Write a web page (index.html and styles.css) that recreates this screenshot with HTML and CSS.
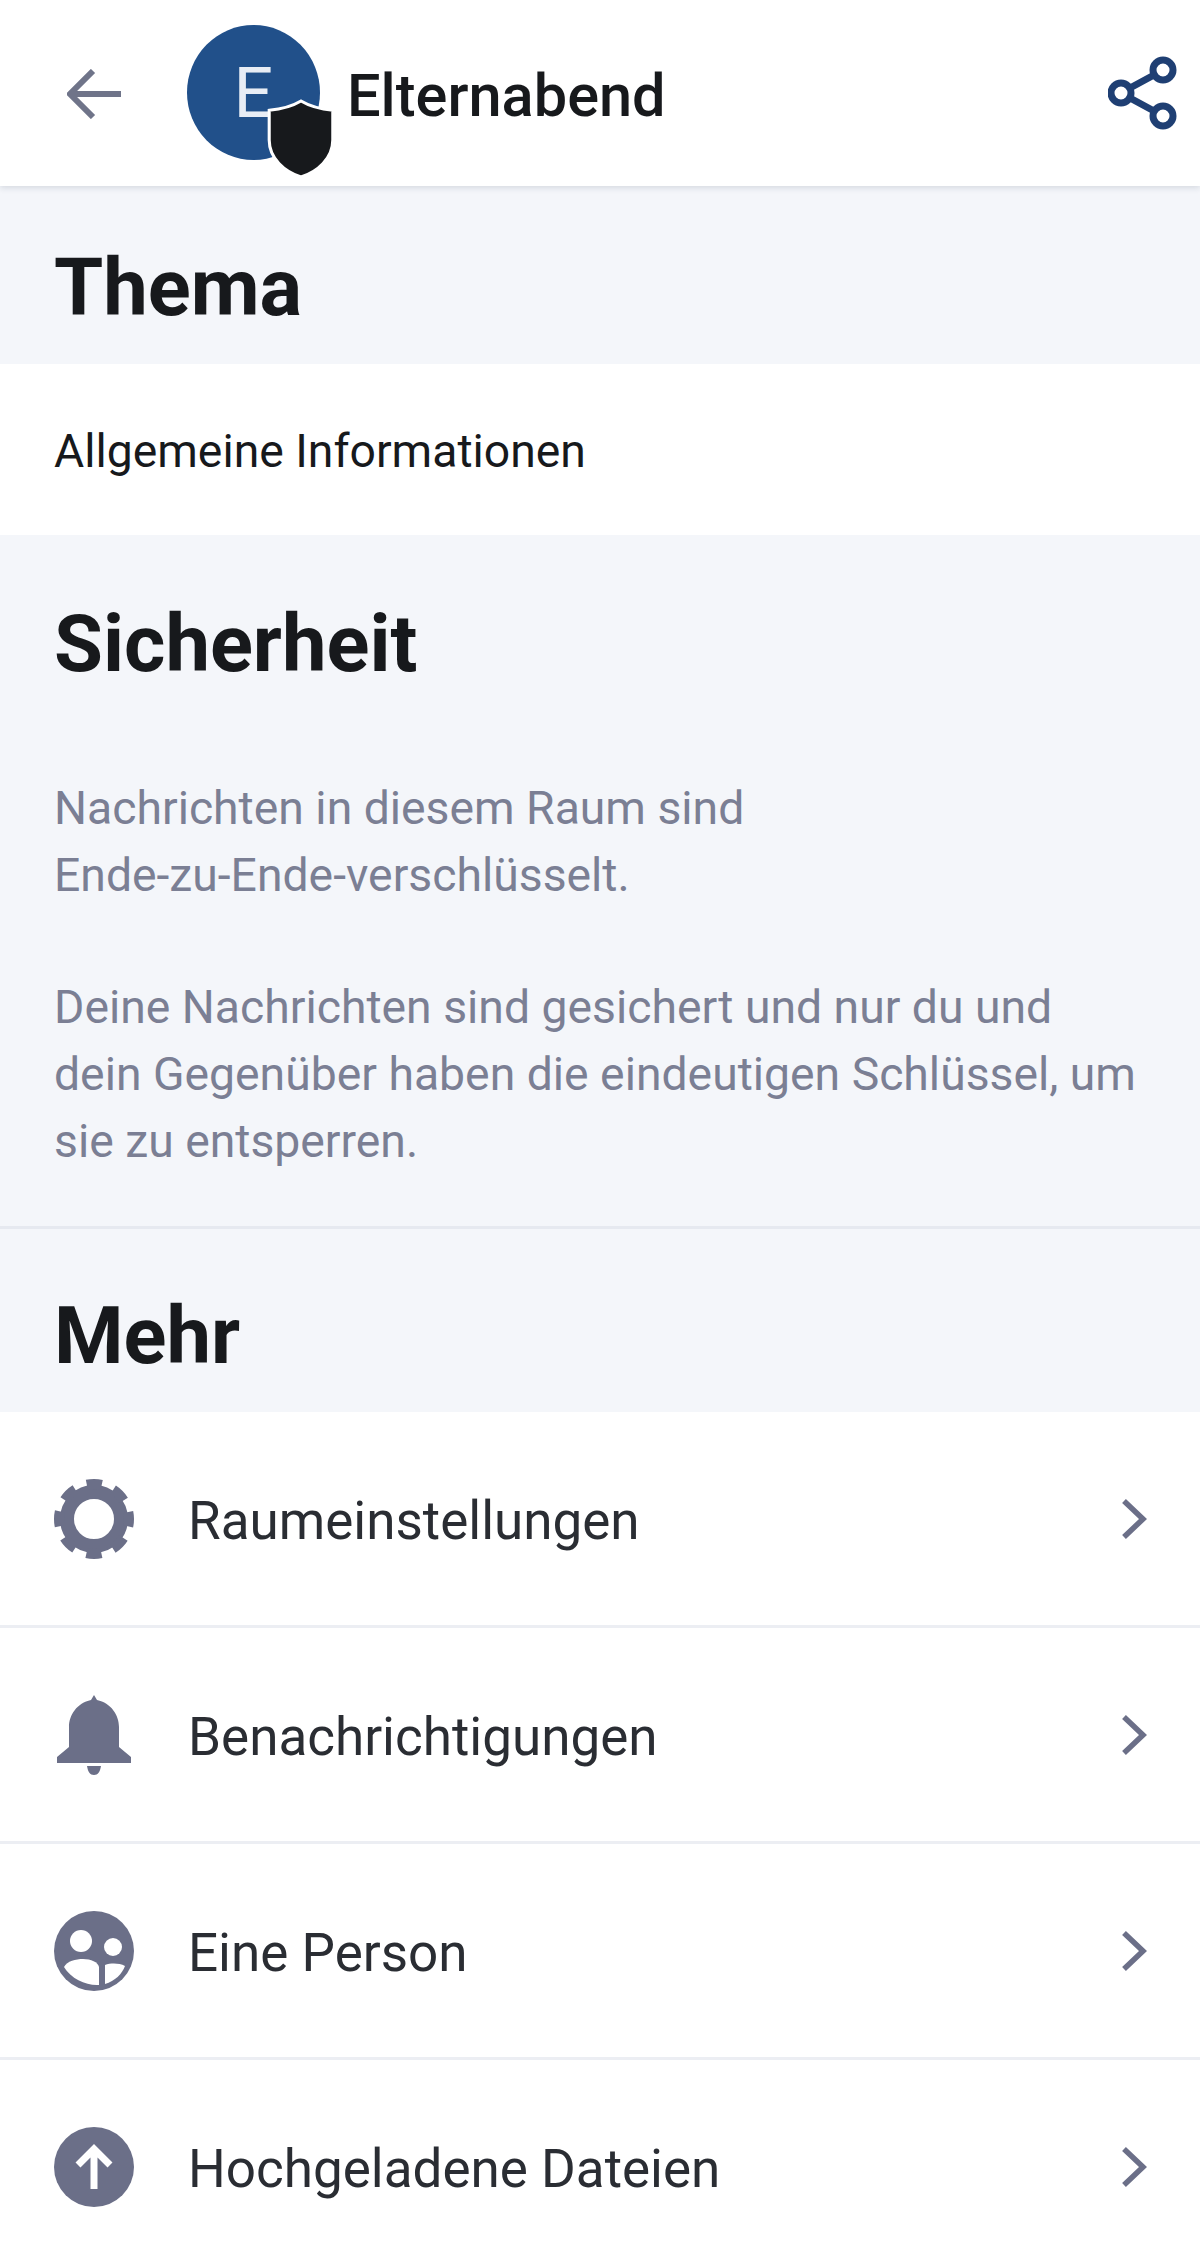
FILE: index.html
```html
<!DOCTYPE html>
<html lang="de">
<head>
    <meta charset="UTF-8">
    <title>Elternabend</title>
    <link rel="stylesheet" href="styles.css">
</head>
<body>
    <header class="topbar">
        <svg class="back" viewBox="0 0 54 50"><path d="M54 25H4M26 2 3 25l23 23" fill="none" stroke="#6f7489" stroke-width="6"/></svg>
        <div class="avatar">
            <span>E</span>
            <svg class="shield" viewBox="0 0 68 78"><path d="M34 2C44 8 54 10 65 11V40C65 58 50 71 34 76 18 71 3 58 3 40V11C14 10 24 8 34 2Z" fill="#17191c" stroke="#fff" stroke-width="3"/></svg>
        </div>
        <div class="room-name">Elternabend</div>
        <svg class="share" viewBox="0 0 70 74"><g fill="none" stroke="#1f3f73" stroke-width="7"><circle cx="13" cy="37" r="10"/><circle cx="55" cy="14" r="10"/><circle cx="55" cy="60" r="10"/><path d="M22 32 46 19M22 42 46 55"/></g></svg>
    </header>

    <section class="band band-topic"><h2>Thema</h2></section>
    <section class="topic"><p>Allgemeine Informationen</p></section>

    <section class="band band-security">
        <h2>Sicherheit</h2>
        <p>Nachrichten in diesem Raum sind<br>Ende-zu-Ende-verschlüsselt.</p>
        <p>Deine Nachrichten sind gesichert und nur du und<br>dein Gegenüber haben die eindeutigen Schlüssel, um<br>sie zu entsperren.</p>
    </section>

    <section class="band band-more"><h2>Mehr</h2></section>

    <ul class="menu">
        <li>
            <svg class="icon" viewBox="0 0 80 80"><g fill="none" stroke="#6b6f88"><circle cx="40" cy="40" r="27" stroke-width="14"/><circle cx="40" cy="40" r="35" stroke-width="10" stroke-dasharray="15 12.49" stroke-dashoffset="7.5"/></g></svg>
            <span>Raumeinstellungen</span>
            <svg class="chevron" viewBox="0 0 26 40"><path d="M3 2 22 20 3 38" fill="none" stroke="#6b6f88" stroke-width="5.5"/></svg>
        </li>
        <li>
            <svg class="icon" viewBox="0 0 80 80"><path fill="#6b6f88" d="M40 0l3 5C57 8 65 20 65 32V52L77 62V68H3V62L15 52V32C15 20 23 8 37 5ZM33 71H47C46 77 44 80 40 80S34 77 33 71Z"/></svg>
            <span>Benachrichtigungen</span>
            <svg class="chevron" viewBox="0 0 26 40"><path d="M3 2 22 20 3 38" fill="none" stroke="#6b6f88" stroke-width="5.5"/></svg>
        </li>
        <li>
            <svg class="icon" viewBox="0 0 80 80"><circle cx="40" cy="40" r="40" fill="#6b6f88"/><g fill="#fff"><circle cx="27" cy="30" r="11"/><circle cx="59" cy="36" r="9"/><path d="M10 56c3-6 12-8 19-8 8 0 15 3 16 8v18C33 75 17 68 10 56Z"/><path d="M51 54c6-2 14-2 20 1-3 8-10 15-20 18Z"/></g></svg>
            <span>Eine Person</span>
            <svg class="chevron" viewBox="0 0 26 40"><path d="M3 2 22 20 3 38" fill="none" stroke="#6b6f88" stroke-width="5.5"/></svg>
        </li>
        <li>
            <svg class="icon" viewBox="0 0 80 80"><circle cx="40" cy="40" r="40" fill="#6b6f88"/><path d="M40 62V24M24 38l16-16 16 16" fill="none" stroke="#fff" stroke-width="7"/></svg>
            <span>Hochgeladene Dateien</span>
            <svg class="chevron" viewBox="0 0 26 40"><path d="M3 2 22 20 3 38" fill="none" stroke="#6b6f88" stroke-width="5.5"/></svg>
        </li>
    </ul>
</body>
</html>
```

FILE: styles.css
```css
body {
    margin: 0;
    font-family: Roboto, "Liberation Sans", sans-serif;
    background-color: #ffffff;
    color: #17191c;
    height: 2258px;
    overflow: hidden;
}
.topbar {
    height: 186px;
    display: flex;
    align-items: center;
    background-color: #ffffff;
    box-shadow: 0 2px 6px rgba(30, 40, 70, 0.14);
    position: relative;
    padding: 0 22px 0 67px;
}
.back {
    width: 54px;
    height: 50px;
    margin-top: 2px;
}
.avatar {
    width: 133px;
    height: 135px;
    border-radius: 50%;
    background-color: #21508a;
    margin-left: 66px;
    margin-top: -1px;
    display: flex;
    align-items: center;
    justify-content: center;
    position: relative;
    color: #e8edf5;
    font-size: 70px;
}
.shield {
    position: absolute;
    left: 79px;
    top: 74px;
    width: 70px;
    height: 80px;
}
.room-name {
    font-weight: 500;
    font-size: 59.5px;
    margin-left: 27px;
    flex: 1;
    margin-top: 6px;
}
.share {
    width: 70px;
    height: 74px;
}
.band {
    background-color: #f4f6fa;
    padding: 0 54px;
}
.band h2 {
    margin: 0;
    font-size: 79.5px;
    font-weight: 700;
    line-height: 88px;
}
.band-topic {
    height: 178px;
    box-sizing: border-box;
    padding-top: 26px;
    display: flex;
    align-items: center;
}
.topic {
    height: 171px;
    display: flex;
    align-items: center;
    padding: 0 54px;
}
.topic p {
    margin: 3px 0 0;
    font-size: 46.3px;
}
.band-security {
    height: 694px;
    padding-top: 65px;
    box-sizing: border-box;
    border-bottom: 3px solid #e6e9f0;
}
.band-security p {
    margin: 0 0 65px;
    font-size: 46.3px;
    line-height: 67px;
    color: #7b7f94;
}
.band-security h2 {
    margin-bottom: 87px;
}
.band-more {
    height: 183px;
    display: flex;
    align-items: flex-end;
}
.band-more h2 {
    padding-bottom: 32px;
}
.menu {
    list-style: none;
    margin: 0;
    padding: 0;
}
.menu li {
    height: 216px;
    box-sizing: border-box;
    display: flex;
    align-items: center;
    padding: 0 53px 0 54px;
    border-bottom: 3px solid #eceef3;
    font-size: 53px;
    color: #2a2d33;
}
.menu span {
    flex: 1;
    margin-left: 54px;
    margin-top: 4px;
}
.icon {
    width: 80px;
    height: 80px;
}
.chevron {
    width: 26px;
    height: 40px;
}
```
